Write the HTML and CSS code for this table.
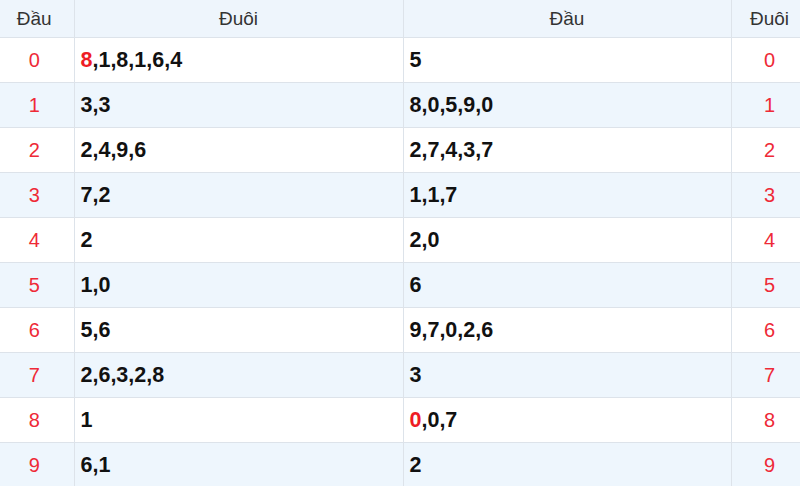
FILE: index.html
```html
<!DOCTYPE html>
<html lang="vi">
<head>
<meta charset="utf-8">
<link rel="stylesheet" href="styles.css">
</head>
<body>
<div class="wrap">
<table class="loto">
  <colgroup>
    <col class="c1"><col class="c2"><col class="c3"><col class="c4">
  </colgroup>
  <thead>
    <tr><th class="first">Đầu</th><th>Đuôi</th><th>Đầu</th><th>Đuôi</th></tr>
  </thead>
  <tbody>
    <tr><td class="num first">0</td><td class="val"><span class="hl">8</span>,1,8,1,6,4</td><td class="val">5</td><td class="num">0</td></tr>
    <tr><td class="num first">1</td><td class="val">3,3</td><td class="val">8,0,5,9,0</td><td class="num">1</td></tr>
    <tr><td class="num first">2</td><td class="val">2,4,9,6</td><td class="val">2,7,4,3,7</td><td class="num">2</td></tr>
    <tr><td class="num first">3</td><td class="val">7,2</td><td class="val">1,1,7</td><td class="num">3</td></tr>
    <tr><td class="num first">4</td><td class="val">2</td><td class="val">2,0</td><td class="num">4</td></tr>
    <tr><td class="num first">5</td><td class="val">1,0</td><td class="val">6</td><td class="num">5</td></tr>
    <tr><td class="num first">6</td><td class="val">5,6</td><td class="val">9,7,0,2,6</td><td class="num">6</td></tr>
    <tr><td class="num first">7</td><td class="val">2,6,3,2,8</td><td class="val">3</td><td class="num">7</td></tr>
    <tr><td class="num first">8</td><td class="val">1</td><td class="val"><span class="hl">0</span>,0,7</td><td class="num">8</td></tr>
    <tr><td class="num first">9</td><td class="val">6,1</td><td class="val">2</td><td class="num">9</td></tr>
  </tbody>
</table>
</div>
</body>
</html>
```
FILE: styles.css
```css
html, body {
  margin: 0;
  padding: 0;
  background: #fff;
}
.wrap {
  width: 800px;
  height: 486px;
  overflow: hidden;
}
.loto {
  width: 808px;
  table-layout: fixed;
  border-collapse: collapse;
  font-family: "Liberation Sans", Arial, sans-serif;
}
.c1 { width: 74px; }
.c2 { width: 329px; }
.c3 { width: 328px; }
.c4 { width: 77px; }
.loto th,
.loto td {
  border: 1px solid #dde3ea;
  padding: 0;
}
.loto tr > :first-child { border-left: none; }
.loto thead tr { background: #eef5fc; }
.loto th {
  height: 37px;
  font-weight: normal;
  font-size: 19px;
  color: #333;
  text-align: center;
  vertical-align: middle;
  border-top: none;
}
.loto td {
  height: 44px;
  vertical-align: middle;
}
.loto .first { padding-right: 5px; }
.loto tbody tr:nth-child(even) { background: #eef6fd; }
.num {
  text-align: center;
  color: #ee2a37;
  font-size: 20px;
}
.val {
  padding-left: 6px !important;
  font-weight: bold;
  font-size: 21.5px;
  color: #111;
}
.hl { color: #ee1c25; }
```
